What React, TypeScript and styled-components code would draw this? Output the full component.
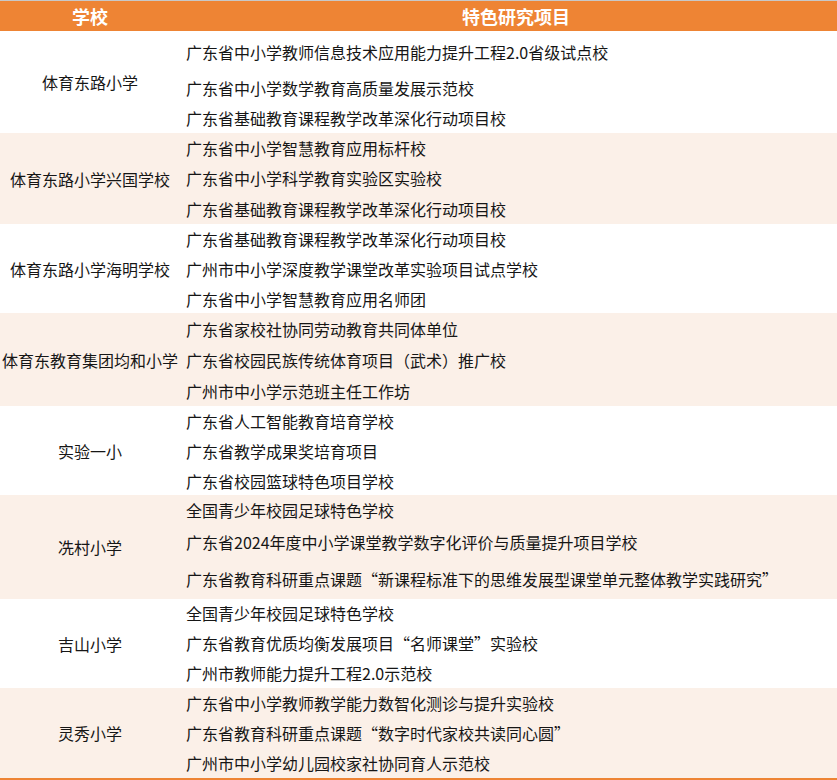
import React from "react";
import styled, { createGlobalStyle } from "styled-components";

const Global = createGlobalStyle`
  html, body { margin: 0; padding: 0; background: #ffffff; }
  body { font-family: "Noto Sans CJK SC", "Noto Sans", sans-serif; }
`;

type Item = { t: string; h?: number };
type Row = { school: string; items: Item[]; extra?: number };

const rows: Row[] = [
  {
    school: "体育东路小学",
    items: [
      { t: "广东省中小学教师信息技术应用能力提升工程2.0省级试点校", h: 42 },
      { t: "广东省中小学数学教育高质量发展示范校" },
      { t: "广东省基础教育课程教学改革深化行动项目校" },
    ],
  },
  {
    school: "体育东路小学兴国学校",
    items: [
      { t: "广东省中小学智慧教育应用标杆校" },
      { t: "广东省中小学科学教育实验区实验校" },
      { t: "广东省基础教育课程教学改革深化行动项目校", h: 31 },
    ],
  },
  {
    school: "体育东路小学海明学校",
    items: [
      { t: "广东省基础教育课程教学改革深化行动项目校" },
      { t: "广州市中小学深度教学课堂改革实验项目试点学校" },
      { t: "广东省中小学智慧教育应用名师团", h: 29 },
    ],
  },
  {
    school: "体育东教育集团均和小学",
    items: [
      { t: "广东省家校社协同劳动教育共同体单位", h: 31 },
      { t: "广东省校园民族传统体育项目（武术）推广校", h: 31 },
      { t: "广州市中小学示范班主任工作坊", h: 31 },
    ],
  },
  {
    school: "实验一小",
    items: [
      { t: "广东省人工智能教育培育学校" },
      { t: "广东省教学成果奖培育项目" },
      { t: "广东省校园篮球特色项目学校", h: 29 },
    ],
  },
  {
    school: "冼村小学",
    items: [
      { t: "全国青少年校园足球特色学校", h: 30 },
      { t: "广东省2024年度中小学课堂教学数字化评价与质量提升项目学校", h: 34 },
      { t: "广东省教育科研重点课题“新课程标准下的思维发展型课堂单元整体教学实践研究”", h: 40 },
    ],
  },
  {
    school: "吉山小学",
    items: [
      { t: "全国青少年校园足球特色学校", h: 28 },
      { t: "广东省教育优质均衡发展项目“名师课堂”实验校", h: 31 },
      { t: "广州市教师能力提升工程2.0示范校", h: 30 },
    ],
  },
  {
    school: "灵秀小学",
    items: [
      { t: "广东省中小学教师教学能力数智化测诊与提升实验校" },
      { t: "广东省教育科研重点课题“数字时代家校共读同心圆”" },
      { t: "广州市中小学幼儿园校家社协同育人示范校" },
    ],
  },
];

const Table = styled.div`
  width: 837px;
  border-top: 1px solid #c8c8c8;
  border-bottom: 2px solid #ee8434;
  box-sizing: border-box;
`;

const HeadRow = styled.div`
  display: grid;
  grid-template-columns: 180px 1fr;
  height: 30px;
  background: #ee8434;
  color: #ffffff;
  font-size: 18px;
  font-weight: 700;
`;

const HeadCell = styled.div<{ $shift?: number }>`
  display: flex;
  align-items: center;
  justify-content: center;
  padding-left: ${(p) => p.$shift ?? 0}px;
  line-height: 1;
`;

const BodyRow = styled.div<{ $alt: boolean }>`
  display: grid;
  grid-template-columns: 180px 1fr;
  background: ${(p) => (p.$alt ? "#fbf0e8" : "#ffffff")};
  color: #161616;
  font-size: 16px;
`;

const SchoolCell = styled.div`
  display: flex;
  align-items: center;
  justify-content: center;
  text-align: center;
  white-space: nowrap;
`;

const ItemsCell = styled.div`
  display: flex;
  flex-direction: column;
  padding-left: 6px;
`;

const Line = styled.div<{ $h: number }>`
  height: ${(p) => p.$h}px;
  display: flex;
  align-items: center;
  white-space: nowrap;
`;

export default function App() {
  return (
    <>
      <Global />
      <Table>
        <HeadRow>
          <HeadCell>学校</HeadCell>
          <HeadCell $shift={15}>特色研究项目</HeadCell>
        </HeadRow>
        {rows.map((r, i) => (
          <BodyRow key={r.school} $alt={i % 2 === 1}>
            <SchoolCell>{r.school}</SchoolCell>
            <ItemsCell>
              {r.items.map((it) => (
                <Line key={it.t} $h={it.h ?? 30}>
                  {it.t}
                </Line>
              ))}
            </ItemsCell>
          </BodyRow>
        ))}
      </Table>
    </>
  );
}
